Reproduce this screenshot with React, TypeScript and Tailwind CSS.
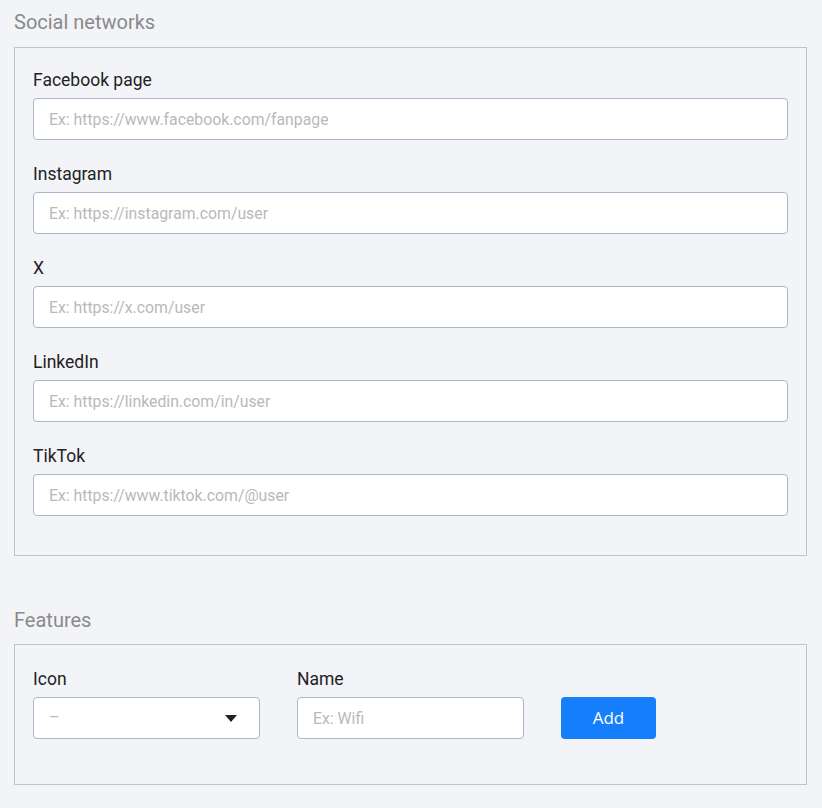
const fields = [
  { label: 'Facebook page', placeholder: 'Ex: https://www.facebook.com/fanpage' },
  { label: 'Instagram', placeholder: 'Ex: https://instagram.com/user' },
  { label: 'X', placeholder: 'Ex: https://x.com/user' },
  { label: 'LinkedIn', placeholder: 'Ex: https://linkedin.com/in/user' },
  { label: 'TikTok', placeholder: 'Ex: https://www.tiktok.com/@user' },
]

const inputCls =
  'block w-full h-[42px] rounded-[4px] border border-[#a9b7cc] bg-white px-[15px] text-[15.8px] text-[#222] placeholder:text-[#b9b9b9] outline-none'

const labelCls = 'block text-[17.5px] leading-[24px] text-[#222] mb-[6px]'

export default function App() {
  return (
    <div className="min-h-screen bg-[#f3f4f8] pl-[14px] pr-[15px] pt-[10px] pb-[20px] font-['Roboto',sans-serif]">
      <h2 className="text-[20px] leading-[24px] text-[#8a8a8a] mb-[13px]">Social networks</h2>
      <div className="border border-[#c2c2c2] px-[18px] pt-[20px] pb-[17px]">
        {fields.map((f) => (
          <div key={f.label} className="mb-[22px]">
            <label className={labelCls}>{f.label}</label>
            <input className={inputCls} placeholder={f.placeholder} />
          </div>
        ))}
      </div>

      <h2 className="mt-[52px] text-[20px] leading-[24px] text-[#8a8a8a] mb-[12px]">Features</h2>
      <div className="border border-[#c2c2c2] px-[18px] pt-[22px] pb-[45px]">
        <div className="flex items-end gap-[37px]">
          <div className="w-[227px]">
            <label className={labelCls}>Icon</label>
            <div className="flex h-[42px] items-center justify-between rounded-[4px] border border-[#a9b7cc] bg-white pl-[15px] pr-[22px]">
              <span className="text-[16px] text-[#b9b9b9]">–</span>
              <svg width="12" height="7" viewBox="0 0 12 7">
                <path d="M0 0h12L6 7z" fill="#222" />
              </svg>
            </div>
          </div>
          <div className="w-[227px]">
            <label className={labelCls}>Name</label>
            <input className={inputCls} placeholder="Ex: Wifi" />
          </div>
          <button className="h-[42px] w-[95px] rounded-[4px] bg-[#157ffb] text-[17px] text-white font-['Open_Sans',sans-serif]">
            Add
          </button>
        </div>
      </div>
    </div>
  )
}
